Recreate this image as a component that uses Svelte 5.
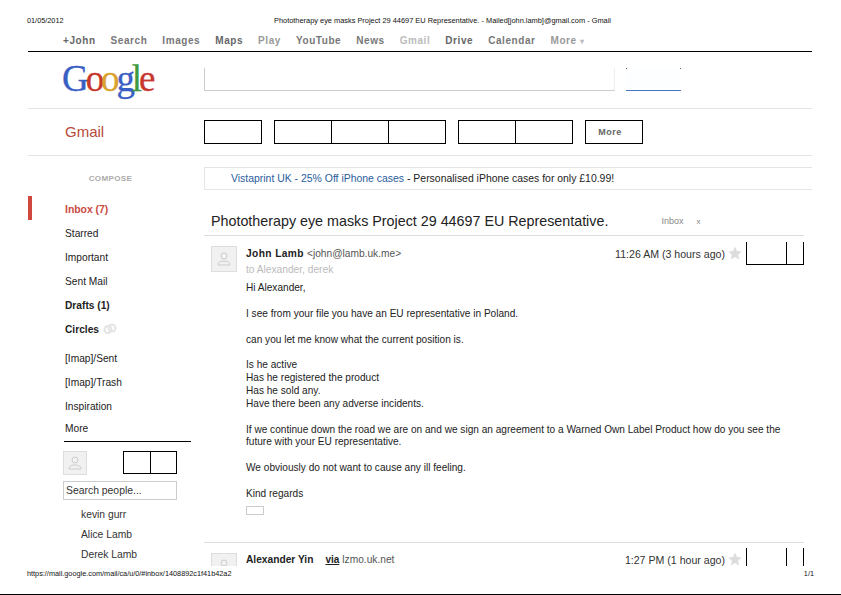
<script>
  const nav = [
    { label: '+John', cls: 'dark' },
    { label: 'Search' },
    { label: 'Images' },
    { label: 'Maps', cls: 'dark' },
    { label: 'Play', cls: 'light' },
    { label: 'YouTube' },
    { label: 'News' },
    { label: 'Gmail', cls: 'faint' },
    { label: 'Drive', cls: 'dark' },
    { label: 'Calendar' },
    { label: 'More', cls: 'light' }
  ]

  const folders = [
    { label: 'Inbox (7)', cls: 'active' },
    { label: 'Starred' },
    { label: 'Important' },
    { label: 'Sent Mail' },
    { label: 'Drafts (1)', cls: 'bold' },
    { label: 'Circles', cls: 'bold', circles: true }
  ]

  const labels = ['[Imap]/Sent', '[Imap]/Trash', 'Inspiration']
  const people = ['kevin gurr', 'Alice Lamb', 'Derek Lamb']
</script>

<style>
:global(body) {
    margin: 0;
    background: #fff;
}

.page {
    width: 841px;
    height: 595px;
    display: flex;
    flex-direction: column;
    overflow: hidden;
    font-family: "Liberation Sans", Arial, sans-serif;
    color: #222;
    box-sizing: border-box;
    border-bottom: 1px solid #000;
}

.print-head {
    height: 14px;
    margin: 13px 0 1px;
    padding: 0 27px;
    display: grid;
    grid-template-columns: 247px 336px;
    align-items: center;
    font-size: 7.3px;
    color: #111;
}

.print-head .title {
    font-size: 7.4px;
    white-space: nowrap;
    text-align: center;
}

.sheet {
    flex: 1;
    min-height: 0;
    margin: 0 29px 0 28px;
    overflow: hidden;
}

.nav {
    height: 24px;
    box-sizing: border-box;
    border-bottom: 1px solid #000;
    padding: 1px 0 0 35px;
    display: flex;
    align-items: center;
    gap: 15px;
    font-size: 10px;
    font-weight: bold;
    letter-spacing: 0.57px;
    color: #777;
}

.nav .dark { color: #666; }
.nav .light { color: #999; }
.nav .faint { color: #bbb; }

.caret {
    color: #bbb;
    font-size: 8px;
    margin-left: 3px;
}

.search-row {
    height: 57px;
    box-sizing: border-box;
    border-bottom: 1px solid #e5e5e5;
    display: flex;
}

.logo {
    width: 176px;
    padding-left: 34px;
    box-sizing: border-box;
    font-family: "Liberation Serif", serif;
    font-size: 37px;
    line-height: 53px;
    letter-spacing: -3.1px;
    -webkit-text-stroke: 0.3px;
}

.blue { color: #3a5fc4; }
.red { color: #c8372d; }
.yellow { color: #d9a22f; }
.green { color: #3f9a3f; }

.search-box {
    width: 411px;
    height: 23px;
    margin-top: 16px;
    box-sizing: border-box;
    border-left: 1px solid #ccc;
    border-bottom: 1px solid #ccc;
    border-right: 1px solid #eee;
}

.search-btn {
    width: 55px;
    height: 23px;
    margin: 16px 0 0 11px;
    box-sizing: border-box;
    border-bottom: 1px solid #4a76c0;
    background:
        linear-gradient(#666, #666) 0 0 / 1px 1px no-repeat,
        linear-gradient(#666, #666) 100% 0 / 1px 1px no-repeat,
        #fcfeff;
}

.tool-row {
    height: 47px;
    box-sizing: border-box;
    border-bottom: 1px solid #e5e5e5;
    display: flex;
    align-items: center;
}

.app-name {
    width: 176px;
    box-sizing: border-box;
    padding: 0 0 2px 37px;
    font-size: 15px;
    color: #b84a3a;
}

.btn-group {
    display: flex;
    height: 24px;
    box-sizing: border-box;
    border: 1px solid #000;
    margin-right: 12px;
}

.btn-group span {
    display: block;
    width: 57px;
    box-sizing: border-box;
    border-left: 1px solid #000;
}

.btn-group span:first-child {
    width: 56px;
    border-left: 0;
}

.more-btn {
    width: 58px;
    height: 24px;
    box-sizing: border-box;
    border: 1px solid #000;
    padding-right: 8px;
    display: flex;
    align-items: center;
    justify-content: center;
    font-size: 9px;
    font-weight: bold;
    letter-spacing: 0.5px;
    color: #666;
}

.main {
    display: grid;
    grid-template-columns: 176px 1fr;
}

.sidebar {
    padding-top: 17px;
}

.compose {
    width: 163px;
    text-align: center;
    font-size: 8px;
    font-weight: bold;
    letter-spacing: 0.4px;
    color: #aaa;
    line-height: 12px;
    padding-left: 2px;
    box-sizing: border-box;
}

.folders {
    margin-top: 11px;
}

.folder {
    height: 24px;
    box-sizing: border-box;
    padding: 2px 0 0 37px;
    font-size: 10.2px;
    color: #222;
    display: flex;
    align-items: center;
    gap: 4px;
}

.folder.bold { font-weight: bold; }

.folder.active {
    font-weight: bold;
    color: #cc4a3f;
    border-left: 4px solid #d0473e;
    padding-left: 33px;
    font-size: 10.4px;
}

.labels {
    margin-top: 5px;
}

.more-link {
    line-height: 20px;
    padding-left: 37px;
    font-size: 10.2px;
    width: 163px;
    box-sizing: border-box;
    margin-top: 2px;
}

.rule {
    width: 127px;
    margin: 2px 0 0 36px;
    border-top: 1px solid #000;
}

.chat-top {
    margin: 9px 0 0 35px;
    width: 114px;
    display: flex;
    justify-content: space-between;
}

.avatar {
    background: #f1f1f1;
    border: 1px solid #ddd;
    box-sizing: border-box;
    display: flex;
    align-items: center;
    justify-content: center;
}

.avatar.small {
    width: 24px;
    height: 24px;
}

.chat-btns {
    display: flex;
    height: 23px;
    box-sizing: border-box;
    border: 1px solid #000;
}

.chat-btns span {
    width: 26px;
    box-sizing: border-box;
}

.chat-btns span + span {
    border-left: 1px solid #000;
}

.people-search {
    margin: 6px 0 5px 35px;
    width: 114px;
    height: 19px;
    line-height: 17px;
    box-sizing: border-box;
    border: 1px solid #ccc;
    padding-left: 2px;
    font-size: 10.4px;
    color: #333;
}

.person {
    padding-left: 53px;
    font-size: 10.3px;
    line-height: 20px;
    color: #333;
}

.content {
    min-width: 0;
    padding-top: 11px;
}

.ad {
    height: 23px;
    box-sizing: border-box;
    border: 1px solid #e5e5e5;
    border-right: 0;
    padding-left: 26px;
    font-size: 10.45px;
    line-height: 22px;
    color: #222;
    white-space: nowrap;
}

.ad a {
    color: #2a5d9c;
    text-decoration: none;
}

.subject-row {
    height: 46px;
    width: 600px;
    box-sizing: border-box;
    border-bottom: 1px solid #ddd;
    display: flex;
    align-items: center;
    padding: 17px 0 0 7px;
}

.subject {
    font-size: 14.3px;
    color: #222;
    white-space: nowrap;
}

.inbox-tag {
    margin-left: 53px;
    font-size: 9px;
    color: #888;
}

.inbox-x {
    margin-left: 13px;
    font-size: 8px;
    color: #888;
}

.message {
    display: grid;
    grid-template-columns: 42px 1fr;
    padding-top: 10px;
    width: 600px;
}

.avatar.big {
    width: 26px;
    height: 26px;
    margin-left: 7px;
}

.msg-head {
    display: flex;
    align-items: flex-start;
    height: 24px;
    padding-top: 1px;
    font-size: 10.2px;
}

.next .msg-head {
    padding-top: 0;
}

.sender {
    font-weight: bold;
    color: #222;
    line-height: 14px;
    letter-spacing: 0.4px;
}

.next .sender {
    letter-spacing: 0;
}

.addr {
    color: #555;
    line-height: 14px;
    margin-left: 3px;
}

.via {
    font-weight: bold;
    text-decoration: underline;
    color: #222;
    margin-left: 12px;
    font-size: 10px;
    line-height: 14px;
}

.time {
    margin-left: auto;
    color: #333;
    font-size: 10.6px;
    line-height: 14px;
}

.star {
    margin: -1px 0 0 3px;
    display: block;
}

.msg-btns {
    width: 58px;
    height: 23px;
    margin-left: 4px;
    box-sizing: border-box;
    border: 1px solid #000;
    border-top: 0;
    display: grid;
    grid-template-columns: 39px 1fr;
    margin-top: -5px;
}

.msg-btns span + span {
    border-left: 1px solid #000;
}

.to {
    font-size: 10.2px;
    color: #bbb;
    line-height: 11px;
    margin-top: -7px;
}

.body {
    font-size: 10.1px;
    line-height: 12.8px;
    color: #222;
    margin-top: 7px;
}

.body p {
    margin: 0 0 13px;
    width: 545px;
}

.body p.sign {
    margin-bottom: 5px;
}

.attachment {
    width: 16px;
    height: 7px;
    border: 1px solid #ccc;
}

.next {
    margin-top: 27px;
    border-top: 1px solid #ddd;
    width: 600px;
}

.print-foot {
    height: 14px;
    margin-bottom: 14px;
    padding: 0 27px;
    display: flex;
    justify-content: space-between;
    align-items: center;
    font-size: 7.3px;
    color: #111;
    white-space: nowrap;
}
</style>

<div class="page">
    <div class="print-head">
        <span>01/05/2012</span>
        <span class="title">Phototherapy eye masks Project 29 44697 EU Representative. - Mailed[john.lamb]@gmail.com - Gmail</span>
    </div>

    <div class="sheet">
        <div class="nav">
            {#each nav as item}
                <span class={item.cls}>{item.label}{#if item.label === 'More'}<span class="caret">▾</span>{/if}</span>
            {/each}
        </div>

        <div class="search-row">
            <div class="logo"><span class="blue">G</span><span class="red">o</span><span class="yellow">o</span><span class="blue">g</span><span class="green">l</span><span class="red">e</span></div>
            <div class="search-box"></div>
            <div class="search-btn"></div>
        </div>

        <div class="tool-row">
            <div class="app-name">Gmail</div>
            <div class="btn-group"><span></span></div>
            <div class="btn-group"><span></span><span></span><span></span></div>
            <div class="btn-group"><span></span><span></span></div>
            <div class="more-btn">More</div>
        </div>

        <div class="main">
            <div class="sidebar">
                <div class="compose">COMPOSE</div>
                <div class="folders">
                    {#each folders as f}
                        <div class="folder {f.cls ?? ''}">
                            {f.label}
                            {#if f.circles}
                                <svg width="14" height="12" viewBox="0 0 14 12" fill="none" stroke="#e4e4e4" stroke-width="2"><circle cx="5" cy="6.5" r="3.5" /><circle cx="9" cy="5" r="3.5" /></svg>
                            {/if}
                        </div>
                    {/each}
                </div>
                <div class="labels">
                    {#each labels as l}
                        <div class="folder">{l}</div>
                    {/each}
                </div>
                <div class="more-link">More</div>
                <div class="rule"></div>
                <div class="chat-top">
                    <div class="avatar small">
                        <svg width="14" height="16" viewBox="0 0 14 16" fill="none" stroke="#ccc"><circle cx="7" cy="5" r="3" /><path d="M1 14c0-3 3-4 6-4s6 1 6 4z" /></svg>
                    </div>
                    <div class="chat-btns"><span></span><span></span></div>
                </div>
                <div class="people-search">Search people...</div>
                {#each people as p}
                    <div class="person">{p}</div>
                {/each}
            </div>

            <div class="content">
                <div class="ad">
                    <a href="#ad">Vistaprint UK - 25% Off iPhone cases</a> - Personalised iPhone cases for only £10.99!
                </div>

                <div class="subject-row">
                    <span class="subject">Phototherapy eye masks Project 29 44697 EU Representative.</span>
                    <span class="inbox-tag">Inbox</span>
                    <span class="inbox-x">x</span>
                </div>

                <div class="message">
                    <div class="avatar big">
                        <svg width="14" height="16" viewBox="0 0 14 16" fill="none" stroke="#ccc"><circle cx="7" cy="5" r="3" /><path d="M1 14c0-3 3-4 6-4s6 1 6 4z" /></svg>
                    </div>
                    <div>
                        <div class="msg-head">
                            <span class="sender">John Lamb</span>
                            <span class="addr">&lt;john@lamb.uk.me&gt;</span>
                            <span class="time">11:26 AM (3 hours ago)</span>
                            <svg class="star" width="14" height="14" viewBox="0 0 24 24" fill="#ddd"><path d="M12 1l3.400 7.600 8.100.8-6.100 5.500 1.800 8.100L12 18.800 4.800 23l1.800-8.100L.5 9.400l8.100-.8z" /></svg>
                            <div class="msg-btns"><span></span><span></span></div>
                        </div>
                        <div class="to">to Alexander, derek</div>
                        <div class="body">
                            <p>Hi Alexander,</p>
                            <p>I see from your file you have an EU representative in Poland.</p>
                            <p>can you let me know what the current position is.</p>
                            <p>Is he active<br />Has he registered the product<br />Has he sold any.<br />Have there been any adverse incidents.</p>
                            <p>If we continue down the road we are on and we sign an agreement to a Warned Own Label Product how do you see the future with your EU representative.</p>
                            <p>We obviously do not want to cause any ill feeling.</p>
                            <p class="sign">Kind regards</p>
                        </div>
                        <div class="attachment"></div>
                    </div>
                </div>

                <div class="next">
                    <div class="message">
                        <div class="avatar big">
                            <svg width="14" height="16" viewBox="0 0 14 16" fill="none" stroke="#ccc"><circle cx="7" cy="5" r="3" /><path d="M1 14c0-3 3-4 6-4s6 1 6 4z" /></svg>
                        </div>
                        <div class="msg-head">
                            <span class="sender">Alexander Yin</span>
                            <span class="via">via</span>
                            <span class="addr">lzmo.uk.net</span>
                            <span class="time">1:27 PM (1 hour ago)</span>
                            <svg class="star" width="14" height="14" viewBox="0 0 24 24" fill="#ddd"><path d="M12 1l3.400 7.600 8.100.8-6.100 5.500 1.800 8.100L12 18.800 4.800 23l1.800-8.100L.5 9.400l8.100-.8z" /></svg>
                            <div class="msg-btns"><span></span><span></span></div>
                        </div>
                    </div>
                </div>
            </div>
        </div>
    </div>

    <div class="print-foot">
        <span>https://mail.google.com/mail/ca/u/0/#inbox/1408892c1f41b42a2</span>
        <span>1/1</span>
    </div>
</div>
